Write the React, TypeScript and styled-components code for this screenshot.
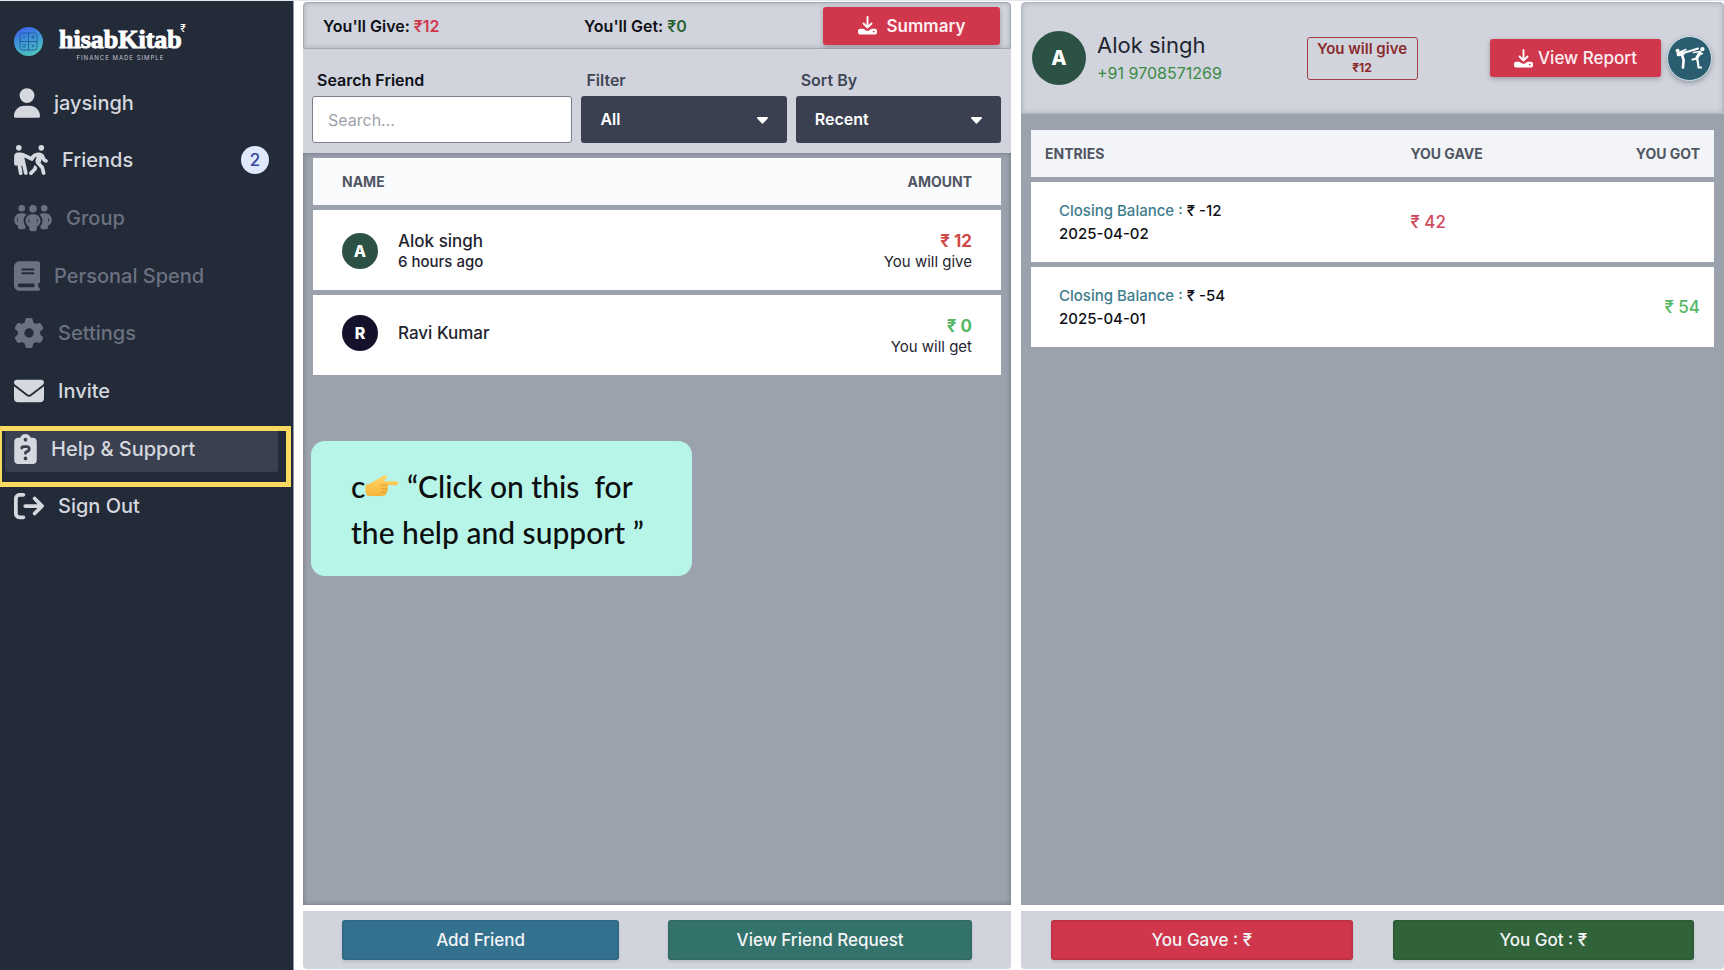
import React from 'react';
import styled, { createGlobalStyle } from 'styled-components';
import {
  FaUser,
  FaPeoplePulling,
  FaPeopleGroup,
  FaBook,
  FaGear,
  FaEnvelope,
  FaClipboardQuestion,
  FaArrowRightFromBracket,
} from 'react-icons/fa6';

const GlobalStyle = createGlobalStyle`
  *, *::before, *::after { box-sizing: border-box; }
  body {
    margin: 0;
    background: #fff;
    color: #1f2430;
    font-family: Inter, "Open Sans", sans-serif;
    font-size: 16px;
    font-weight: 500;
  }
  button, input, select { font: inherit; }
  h1, p { margin: 0; }
`;

const Page = styled.div`
  display: grid;
  grid-template-columns: 293px minmax(0, 141fr) minmax(0, 140fr);
  column-gap: 10px;
  min-height: 100vh;
  border-top: 1px solid #e3e6eb;
`;

/* ---------- Sidebar ---------- */

const Sidebar = styled.aside`
  background: #232a38;
  box-shadow: 1px 0 0 #9298a3;
`;

const Brand = styled.a`
  display: flex;
  align-items: center;
  gap: 16px;
  height: 73px;
  padding: 8px 14px 0;
  color: #fff;
  text-decoration: none;
`;

const BrandText = styled.span`
  display: flex;
  flex-direction: column;
  align-items: center;
  padding-top: 6px;
`;

const BrandName = styled.span`
  position: relative;
  font: 700 26px/26px "Liberation Serif", serif;
  -webkit-text-stroke: 1px #fff;
`;

const BrandMark = styled.sup`
  position: absolute;
  top: -4px;
  right: -4px;
  font: 500 10px/10px Inter, sans-serif;
  -webkit-text-stroke: 0;
`;

const Tagline = styled.span`
  font: 400 6px/10px Inter, sans-serif;
  letter-spacing: 1px;
  color: #c3c7cf;
`;

const Nav = styled.nav`
  display: grid;
  grid-auto-rows: 1fr;
  align-items: center;
  height: 461px;
  padding: 0 15px 0 5px;
`;

const NavSlot = styled.div`
  position: relative;
`;

const NavLink = styled.a<{ $iconWidth: number; $muted?: boolean; $active?: boolean }>`
  display: flex;
  align-items: center;
  gap: 14px;
  height: 46px;
  padding: 0 9px;
  border-radius: 3px;
  font-size: 20px;
  line-height: 28px;
  text-decoration: none;
  color: ${(p) => (p.$muted ? '#6b7180' : '#d5d8df')};
  background: ${(p) => (p.$active ? '#3a4050' : 'transparent')};

  svg {
    width: ${(p) => p.$iconWidth}px;
    height: 30px;
    flex: none;
  }
`;

const Count = styled.span`
  display: grid;
  place-items: center;
  width: 28px;
  height: 28px;
  margin-left: auto;
  border-radius: 50%;
  background: #e0e8fb;
  color: #3646a0;
  font-size: 17px;
`;

const Highlight = styled.span`
  position: absolute;
  inset: 0 -13px -15px -8px;
  border: 5px solid #f9d95f;
  pointer-events: none;
`;

/* ---------- Shared panel parts ---------- */

const Panel = styled.section`
  display: flex;
  flex-direction: column;
  padding-top: 1px;
`;

const Footer = styled.footer<{ $side: number; $gap: number }>`
  display: flex;
  gap: ${(p) => p.$gap}px;
  margin: 6px 0 1px;
  padding: 9px ${(p) => p.$side}px;
  border-radius: 0 0 4px 4px;
  background: #d1d4dc;
`;

const FooterButton = styled.button<{ $color: string; $grow?: number }>`
  flex: ${(p) => p.$grow ?? 1} 1 0;
  height: 40px;
  border: 0;
  border-radius: 3px;
  background: ${(p) => p.$color};
  color: #f3f5f7;
  font-size: 17px;
  box-shadow: inset 0 0 3px rgba(0, 0, 0, 0.25), 0 2px 3px rgba(0, 0, 0, 0.1);
`;

const RedButton = styled.button<{ $gap: number }>`
  display: flex;
  align-items: center;
  justify-content: center;
  gap: ${(p) => p.$gap}px;
  height: 38px;
  border: 0;
  border-radius: 3px;
  background: #d0364c;
  color: #fdeff1;
  font-size: 17px;
  white-space: nowrap;
  box-shadow: 0 2px 5px rgba(60, 20, 30, 0.3);
`;

const Avatar = styled.span<{ $size: number; $color: string }>`
  display: grid;
  place-items: center;
  flex: none;
  width: ${(p) => p.$size}px;
  height: ${(p) => p.$size}px;
  border-radius: 50%;
  background: ${(p) => p.$color};
  color: #fff;
  font-weight: 800;
  font-size: ${(p) => (p.$size > 40 ? 20 : 16)}px;
`;

const Table = styled.table`
  width: 100%;
  border-collapse: separate;
  border-spacing: 0 5px;
  table-layout: fixed;
`;

const HeadCell = styled.th<{ $pad: number; $tint: string; $end?: boolean; $width?: string }>`
  width: ${(p) => p.$width ?? 'auto'};
  height: 47px;
  padding: 0 ${(p) => p.$pad}px;
  background: ${(p) => p.$tint};
  color: #505663;
  font-size: 14px;
  font-weight: 700;
  text-align: ${(p) => (p.$end ? 'right' : 'left')};
`;

const Cell = styled.td<{ $pad: number; $top?: number; $end?: boolean; $color?: string }>`
  height: 80px;
  padding: ${(p) => p.$top ?? 0}px ${(p) => p.$pad}px 0;
  background: #fff;
  color: ${(p) => p.$color ?? 'inherit'};
  font-size: 17px;
  text-align: ${(p) => (p.$end ? 'right' : 'left')};
  vertical-align: ${(p) => (p.$top ? 'top' : 'middle')};
`;

/* ---------- Friends panel ---------- */

const Totals = styled.div`
  display: grid;
  grid-template-columns: 261fr 239fr 177px;
  align-items: center;
  height: 47px;
  padding: 0 10px 0 19px;
  border: 1px solid #a3a8b2;
  border-radius: 4px 4px 0 0;
  background: #d1d4dc;
  box-shadow: inset 0 0 5px rgba(70, 78, 95, 0.3);
  color: #0e1016;
  font-weight: 600;
`;

const Money = styled.span<{ $color: string }>`
  color: ${(p) => p.$color};
`;

const Filters = styled.form`
  display: grid;
  grid-template-columns: 260fr 205fr 205fr;
  column-gap: 9px;
  padding: 20px 10px 10px 9px;
  background: #d1d4dc;
`;

const Field = styled.label<{ $color: string }>`
  display: flex;
  flex-direction: column;
  gap: 4px;
  color: ${(p) => p.$color};
  font-weight: 600;
  line-height: 23px;
`;

const FieldName = styled.span`
  padding-left: 5px;
`;

const SearchInput = styled.input`
  width: 100%;
  height: 47px;
  padding: 0 15px;
  border: 1px solid #7b808c;
  border-radius: 3px;
  background: #fff;
  font-weight: 400;

  &::placeholder {
    color: #9da1ab;
    opacity: 1;
  }
`;

const SelectBox = styled.span`
  position: relative;
  display: block;

  svg {
    position: absolute;
    top: 21px;
    right: 19px;
    pointer-events: none;
  }
`;

const Select = styled.select`
  appearance: none;
  width: 100%;
  height: 47px;
  padding: 0 19px;
  border: 0;
  border-radius: 3px;
  background: #3a4050;
  color: #fff;
  font-weight: 600;
`;

const FriendList = styled.div`
  position: relative;
  flex: 1;
  padding: 0 10px;
  background: #9ca1ae;
  box-shadow: inset 0 0 5px rgba(70, 70, 80, 0.5);
`;

const Friend = styled.div`
  display: flex;
  align-items: center;
  gap: 20px;
`;

const Primary = styled.div<{ $color?: string; $bold?: boolean }>`
  color: ${(p) => p.$color ?? 'inherit'};
  font-size: 17px;
  font-weight: ${(p) => (p.$bold ? 700 : 500)};
  line-height: 22px;
`;

const Secondary = styled.div<{ $light?: boolean }>`
  font-size: 15px;
  font-weight: ${(p) => (p.$light ? 400 : 500)};
  line-height: 20px;
`;

const Callout = styled.div`
  position: absolute;
  top: 288px;
  left: 8px;
  width: 381px;
  padding: 22px 38px 21px 40px;
  border-radius: 14px;
  background: #b6f5e7;
  color: #0b0d0e;
  font: 500 30px/46px Lato, sans-serif;
  white-space: pre;
`;

const CalloutLine = styled.div`
  display: flex;
  align-items: center;
`;

/* ---------- Ledger panel ---------- */

const LedgerHeader = styled.header`
  display: flex;
  align-items: center;
  justify-content: space-between;
  height: 112px;
  padding: 0 11px 0 10px;
  border: 1px solid #b4b8c1;
  border-radius: 4px 4px 0 0;
  background: #d1d4dc;
  box-shadow: inset 0 0 5px rgba(70, 78, 95, 0.3);
`;

const Profile = styled.div`
  display: flex;
  align-items: center;
  gap: 11px;
  min-width: 202px;
`;

const ProfileName = styled.h1`
  font-size: 22px;
  font-weight: 400;
  line-height: 30px;
`;

const Phone = styled.p`
  color: #3b8a44;
  font-size: 16px;
  font-weight: 400;
  line-height: 26px;
`;

const Balance = styled.div`
  width: 111px;
  padding: 1px 0 2px;
  border: 1px solid #a04044;
  border-radius: 3px;
  color: #8b2a2e;
  font-size: 15px;
  font-weight: 600;
  line-height: 20px;
  text-align: center;
`;

const BalanceAmount = styled.div`
  font-size: 12px;
  font-weight: 700;
  line-height: 18px;
`;

const Actions = styled.div`
  display: flex;
  align-items: center;
  gap: 6px;

  ${RedButton} {
    width: 171px;
  }
`;

const RoundButton = styled.button`
  width: 45px;
  height: 45px;
  padding: 0;
  border: 1px solid #cfe3ea;
  border-radius: 50%;
  background: #2a5d70;
  box-shadow: 0 2px 5px rgba(30, 40, 60, 0.35);

  svg {
    display: block;
    margin: 0 auto;
  }
`;

const Entries = styled.div`
  flex: 1;
  padding: 11px 10px;
  background: #9ca1ae;
`;

const EntryInfo = styled.div`
  padding-left: 14px;
  color: #0e1016;
  font-size: 15px;
  line-height: 23px;
`;

const EntryLabel = styled.span`
  color: #3c7c8c;
`;

/* ---------- Drawings ---------- */

const LogoIcon = () => (
  <svg width="29" height="29" viewBox="0 0 29 29" aria-hidden="true">
    <defs>
      <linearGradient id="logo" x1="0.2" y1="0" x2="0.6" y2="1">
        <stop offset="0" stopColor="#3f5ff0" />
        <stop offset="0.5" stopColor="#3f97d4" />
        <stop offset="1" stopColor="#4fc3bd" />
      </linearGradient>
    </defs>
    <circle cx="14.5" cy="14.5" r="14.5" fill="url(#logo)" />
    <g fill="none" stroke="#1d5c98" strokeWidth="0.9">
      <rect x="6" y="6" width="17" height="17" rx="2.5" />
      <path d="M14.5 6v17M6 14.5h17M8.5 10h3.5M17 10h4M19 8v4M8.5 17.8h3.5M8.5 19.8h3.5M17.5 17.3l3 3M20.5 17.3l-3 3" />
    </g>
  </svg>
);

const DownloadIcon = () => (
  <svg width="19" height="19" viewBox="0 0 19 19" fill="none" aria-hidden="true">
    <path d="M9.5 1v10M5.500 7.500l4 4 4-4" stroke="#fff" strokeWidth="1.900" strokeLinecap="round" strokeLinejoin="round" />
    <path d="M2 12.800h3.400l2.300 1.500c1 .7 2.600.7 3.600 0l2.300-1.500H17a2 2 0 0 1 2 2v1.600a2 2 0 0 1-2 2H2a2 2 0 0 1-2-2v-1.600a2 2 0 0 1 2-2z" fill="#fff" />
    <circle cx="15.800" cy="15.600" r="0.900" fill="#d0364c" />
  </svg>
);

const CaretIcon = () => (
  <svg width="11" height="7" viewBox="0 0 11 7" aria-hidden="true">
    <path d="M1 0h9c.9 0 1.300 1 .7 1.600L6.300 6.300a1.100 1.100 0 0 1-1.600 0L.3 1.600C-.3 1 .1 0 1 0z" fill="#fff" />
  </svg>
);

const SparringIcon = () => (
  <svg width="30" height="22" viewBox="0 0 30 22" fill="none" stroke="#fff" strokeLinecap="round" strokeLinejoin="round" aria-hidden="true">
    <circle cx="2.600" cy="3.800" r="2" fill="#fff" stroke="none" />
    <circle cx="27.400" cy="2.200" r="2.100" fill="#fff" stroke="none" />
    <path d="M3.500 7.200L8 6.200" strokeWidth="4" />
    <path d="M8 6l8-2.200L23 1.500" strokeWidth="2" />
    <path d="M7 8l1.600 5-.6 7.500" strokeWidth="2.600" />
    <path d="M5 5l6-2.500" strokeWidth="1.500" />
    <path d="M25 5.500L22 10.500" strokeWidth="3.200" />
    <path d="M25.500 4.500L18.500 5.500M24 8l3.500-1.500" strokeWidth="1.500" />
    <path d="M22 11.500l-4.500 1M22 11l1 5 .5 4.500h2.500" strokeWidth="2.200" />
  </svg>
);

const PointingHand = () => (
  <svg width="34" height="22" viewBox="0 0 34 22" role="img" aria-label="pointing right">
    <defs>
      <linearGradient id="hand" x1="0" y1="0" x2="0" y2="1">
        <stop offset="0" stopColor="#ffd66b" />
        <stop offset="1" stopColor="#f6b436" />
      </linearGradient>
    </defs>
    <path
      d="M1 9.500C4 9 7 7.500 9.500 6c3-1.900 6.500-4 9.500-5.500 2-1 3.800.7 2.600 2.400L18.500 6.300h12.800c2.500 0 2.500 3.900 0 3.900H22c1.600 1 1.600 3 .2 3.700 1 1.300.4 3-1 3.400.6 1.700-.6 3.300-2.700 3.500-4.500.6-11 .6-16.500-.4C0 18 0 12 1 9.500z"
      fill="url(#hand)"
    />
    <path d="M22 10.200h-6M22.200 13.900h-5.700M21.200 17.300h-5" stroke="#d9922a" strokeWidth="0.900" strokeLinecap="round" />
  </svg>
);

/* ---------- Data ---------- */

const navItems = [
  { label: 'jaysingh', Icon: FaUser, iconWidth: 26 },
  { label: 'Friends', Icon: FaPeoplePulling, iconWidth: 34, count: 2 },
  { label: 'Group', Icon: FaPeopleGroup, iconWidth: 38, muted: true },
  { label: 'Personal Spend', Icon: FaBook, iconWidth: 26, muted: true },
  { label: 'Settings', Icon: FaGear, iconWidth: 30, muted: true },
  { label: 'Invite', Icon: FaEnvelope, iconWidth: 30 },
  { label: 'Help & Support', Icon: FaClipboardQuestion, iconWidth: 23, active: true },
  { label: 'Sign Out', Icon: FaArrowRightFromBracket, iconWidth: 30 },
];

const friends = [
  { name: 'Alok singh', seen: '6 hours ago', color: '#2b5244', amount: '₹ 12', note: 'You will give', tone: '#cf4a48' },
  { name: 'Ravi Kumar', seen: '', color: '#14112a', amount: '₹ 0', note: 'You will get', tone: '#55b866' },
];

const entries = [
  { balance: '₹ -12', date: '2025-04-02', gave: '₹ 42', got: '' },
  { balance: '₹ -54', date: '2025-04-01', gave: '', got: '₹ 54' },
];

export default function App() {
  return (
    <>
      <GlobalStyle />
      <Page>
        <Sidebar>
          <Brand href="#home">
            <LogoIcon />
            <BrandText>
              <BrandName>
                hisabKitab<BrandMark>₹</BrandMark>
              </BrandName>
              <Tagline>FINANCE MADE SIMPLE</Tagline>
            </BrandText>
          </Brand>
          <Nav>
            {navItems.map(({ label, Icon, iconWidth, count, muted, active }) => (
              <NavSlot key={label}>
                <NavLink href="#" $iconWidth={iconWidth} $muted={muted} $active={active}>
                  <Icon aria-hidden="true" />
                  {label}
                  {count && <Count>{count}</Count>}
                </NavLink>
                {active && <Highlight />}
              </NavSlot>
            ))}
          </Nav>
        </Sidebar>

        <Panel>
          <Totals>
            <span>
              You'll Give: <Money $color="#d0364c">₹12</Money>
            </span>
            <span>
              You'll Get: <Money $color="#2c6335">₹0</Money>
            </span>
            <RedButton type="button" $gap={10}>
              <DownloadIcon />
              Summary
            </RedButton>
          </Totals>
          <Filters>
            <Field $color="#0e1016">
              <FieldName>Search Friend</FieldName>
              <SearchInput type="text" placeholder="Search..." />
            </Field>
            <Field $color="#414757">
              <FieldName>Filter</FieldName>
              <SelectBox>
                <Select defaultValue="All">
                  <option>All</option>
                </Select>
                <CaretIcon />
              </SelectBox>
            </Field>
            <Field $color="#414757">
              <FieldName>Sort By</FieldName>
              <SelectBox>
                <Select defaultValue="Recent">
                  <option>Recent</option>
                </Select>
                <CaretIcon />
              </SelectBox>
            </Field>
          </Filters>
          <FriendList>
            <Table>
              <thead>
                <tr>
                  <HeadCell $pad={29} $tint="#f9fafc">NAME</HeadCell>
                  <HeadCell $pad={29} $tint="#f9fafc" $end>AMOUNT</HeadCell>
                </tr>
              </thead>
              <tbody>
                {friends.map((f) => (
                  <tr key={f.name}>
                    <Cell $pad={29} $top={20}>
                      <Friend>
                        <Avatar $size={36} $color={f.color}>{f.name[0]}</Avatar>
                        <div>
                          <Primary>{f.name}</Primary>
                          {f.seen && <Secondary>{f.seen}</Secondary>}
                        </div>
                      </Friend>
                    </Cell>
                    <Cell $pad={29} $top={20} $end>
                      <Primary $color={f.tone} $bold>{f.amount}</Primary>
                      <Secondary $light>{f.note}</Secondary>
                    </Cell>
                  </tr>
                ))}
              </tbody>
            </Table>
            <Callout>
              <CalloutLine>
                <span>c</span>
                <PointingHand />
                <span>{' “Click on this  for'}</span>
              </CalloutLine>
              <CalloutLine>the help and support ”</CalloutLine>
            </Callout>
          </FriendList>
          <Footer $side={39} $gap={49}>
            <FooterButton type="button" $color="#34718f" $grow={10}>Add Friend</FooterButton>
            <FooterButton type="button" $color="#34736b" $grow={11}>View Friend Request</FooterButton>
          </Footer>
        </Panel>

        <Panel>
          <LedgerHeader>
            <Profile>
              <Avatar $size={54} $color="#2b5244">A</Avatar>
              <div>
                <ProfileName>Alok singh</ProfileName>
                <Phone>+91 9708571269</Phone>
              </div>
            </Profile>
            <Balance>
              You will give
              <BalanceAmount>₹12</BalanceAmount>
            </Balance>
            <Actions>
              <RedButton type="button" $gap={5}>
                <DownloadIcon />
                View Report
              </RedButton>
              <RoundButton type="button" aria-label="Friend settings">
                <SparringIcon />
              </RoundButton>
            </Actions>
          </LedgerHeader>
          <Entries>
            <Table>
              <thead>
                <tr>
                  <HeadCell $pad={14} $tint="#f2f4f7" $width="53.5%">ENTRIES</HeadCell>
                  <HeadCell $pad={14} $tint="#f2f4f7">YOU GAVE</HeadCell>
                  <HeadCell $pad={14} $tint="#f2f4f7" $end>YOU GOT</HeadCell>
                </tr>
              </thead>
              <tbody>
                {entries.map((e) => (
                  <tr key={e.date}>
                    <Cell $pad={14}>
                      <EntryInfo>
                        <div>
                          <EntryLabel>Closing Balance :</EntryLabel> {e.balance}
                        </div>
                        <div>{e.date}</div>
                      </EntryInfo>
                    </Cell>
                    <Cell $pad={14} $color="#d04a5e">{e.gave}</Cell>
                    <Cell $pad={14} $color="#55b866" $end>{e.got}</Cell>
                  </tr>
                ))}
              </tbody>
            </Table>
          </Entries>
          <Footer $side={30} $gap={40}>
            <FooterButton type="button" $color="#d0364c">You Gave : ₹</FooterButton>
            <FooterButton type="button" $color="#30633a">You Got : ₹</FooterButton>
          </Footer>
        </Panel>
      </Page>
    </>
  );
}
